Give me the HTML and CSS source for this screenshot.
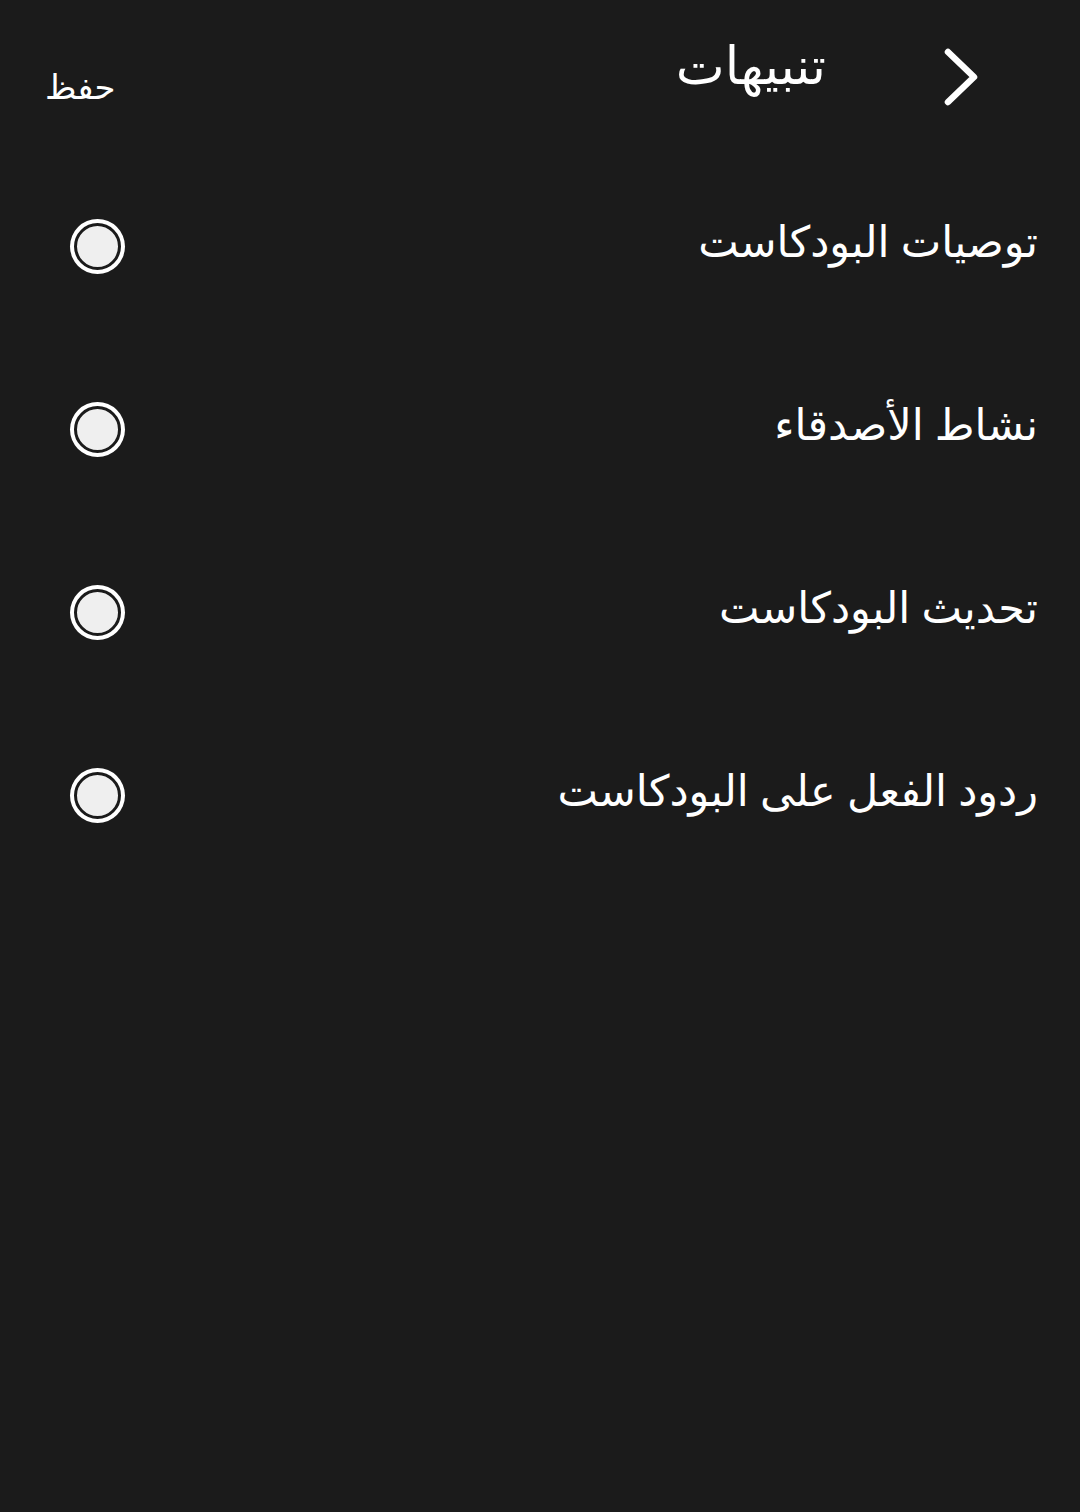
FILE: index.html
```html
<!DOCTYPE html>
<html lang="ar" dir="rtl">
<head>
<meta charset="utf-8">
<link rel="stylesheet" href="styles.css">
</head>
<body>
<div class="screen">
  <header class="header">
    <div class="back">
      <svg width="36" height="60" viewBox="0 0 36 60"><path d="M5 5 L31 30 L5 55" fill="none" stroke="#fff" stroke-width="6.5" stroke-linecap="round" stroke-linejoin="round"/></svg>
    </div>
    <h1 class="title">تنبيهات</h1>
    <div class="save">حفظ</div>
  </header>
  <ul class="list">
    <li class="row"><span class="label">توصيات البودكاست</span><span class="radio"></span></li>
    <li class="row"><span class="label">نشاط الأصدقاء</span><span class="radio"></span></li>
    <li class="row"><span class="label">تحديث البودكاست</span><span class="radio"></span></li>
    <li class="row"><span class="label">ردود الفعل على البودكاست</span><span class="radio"></span></li>
  </ul>
</div>
</body>
</html>
```

FILE: styles.css
```css
html, body {
  margin: 0;
  padding: 0;
  background: #1b1b1b;
}
body {
  width: 1080px;
  height: 1512px;
  font-family: "Noto Sans", "DejaVu Sans", sans-serif;
  color: #fff;
}
.screen {
  direction: rtl;
}
.header {
  height: 155px;
  display: flex;
  align-items: flex-start;
  padding: 0 101px 0 45px;
  box-sizing: border-box;
}
.back {
  margin-top: 47px;
  width: 36px;
  height: 60px;
}
.title {
  margin: 0 117px 0 0;
  padding-top: 28px;
  font-size: 52px;
  font-weight: normal;
  line-height: 72px;
}
.save {
  margin-right: auto;
  padding-top: 62px;
  font-size: 34px;
  line-height: 48px;
}
.list {
  list-style: none;
  margin: 0;
  padding: 0;
}
.row {
  height: 183px;
  display: flex;
  align-items: center;
  justify-content: space-between;
  padding: 0 42px 0 70px;
  box-sizing: border-box;
}
.label {
  font-size: 43px;
  line-height: 60px;
  margin-bottom: 12px;
}
.radio {
  width: 41px;
  height: 41px;
  border-radius: 50%;
  background: #efefef;
  border: 3px solid #1b1b1b;
  box-shadow: 0 0 0 4px #fff;
  margin-left: 4px;
}
```
